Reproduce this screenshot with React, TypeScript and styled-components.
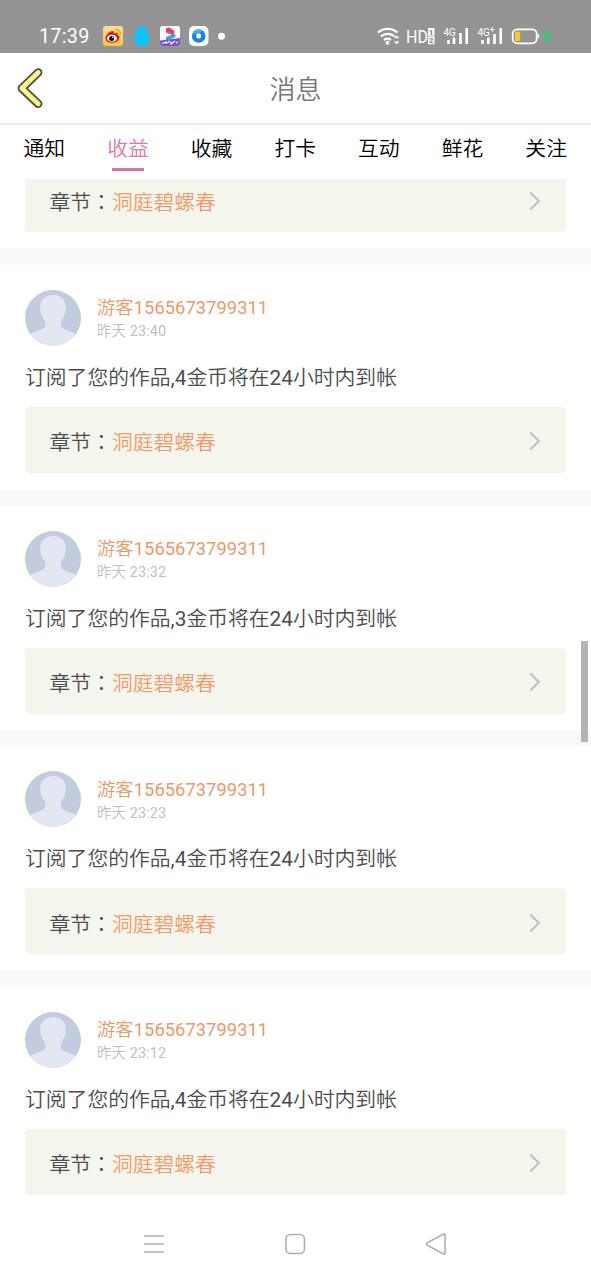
import React from "react";
import styled, { createGlobalStyle } from "styled-components";

const GlobalStyle = createGlobalStyle`
  * { box-sizing: border-box; }
  body {
    margin: 0;
    background: #fff;
    font-family: Roboto, "Noto Sans CJK SC", sans-serif;
  }
`;

const Screen = styled.div`
  position: relative;
  display: flex;
  flex-direction: column;
  width: 591px;
  height: 1280px;
  overflow: hidden;
  background: #fff;
`;

const StatusBar = styled.div`
  display: flex;
  flex: none;
  justify-content: space-between;
  align-items: center;
  height: 52.5px;
  padding: 19px 36px 0 39px;
  background: #949494;
  color: #fff;
`;

const StatusGroup = styled.div`
  display: flex;
  align-items: center;
  height: 34px;
`;

const Clock = styled.span`
  width: 64px;
  padding-top: 2px;
  font-size: 19.7px;
  line-height: 34px;
  letter-spacing: 0.3px;
`;

const Header = styled.header`
  display: flex;
  flex: none;
  align-items: center;
  height: 72.5px;
  padding: 0 17px;
  border-bottom: 2px solid #ececec;
`;

const BackIcon = styled.svg`
  flex: none;
  width: 27px;
  height: 42px;
`;

const Title = styled.h1`
  flex: 1;
  margin: 0 27px 0 0;
  padding-top: 5px;
  color: #777;
  font-size: 26px;
  font-weight: 350;
  line-height: 38px;
  text-align: center;
`;

const Tabs = styled.nav`
  display: flex;
  flex: none;
  justify-content: space-between;
  height: 53.9px;
  padding: 8px 24px 0 23.5px;
`;

const Tab = styled.div<{ $active?: boolean }>`
  display: flex;
  flex-direction: column;
  align-items: center;
  gap: 3px;
  color: ${(p) => (p.$active ? "#e277ac" : "#000")};
  font-size: 20.8px;
  font-weight: 350;
  line-height: 32px;
  &::after {
    content: "";
    width: 32px;
    height: 3px;
    background: ${(p) => (p.$active ? "#d873a5" : "transparent")};
  }
`;

const List = styled.main`
  display: flex;
  flex: 1;
  flex-direction: column;
  min-height: 0;
  overflow: hidden;
`;

const Card = styled.article<{ $partial?: boolean }>`
  flex: none;
  height: ${(p) => (p.$partial ? "86.5px" : "240.7px")};
  padding: ${(p) => (p.$partial ? "0" : "24.5px")} 25px 0;
  border-bottom: 16.5px solid #faf8f9;
`;

const Sender = styled.div`
  display: flex;
  gap: 16px;
`;

const Avatar = styled.svg`
  flex: none;
  width: 56px;
  height: 56px;
`;

const SenderText = styled.div`
  display: flex;
  flex-direction: column;
  padding-top: 4.5px;
`;

const Digits = styled.span`
  font-weight: 400;
`;

const Name = styled.span`
  color: #eb9a6b;
  font-size: 18.3px;
  font-weight: 350;
  letter-spacing: 0.07px;
  line-height: 27px;
`;

const Time = styled.span`
  color: #bfbfbf;
  font-size: 14.4px;
  font-weight: 350;
  letter-spacing: 0.15px;
  line-height: 21px;
`;

const Message = styled.p`
  height: 32px;
  margin: 16px 0 13px;
  color: #4c4c4c;
  font-size: 20.8px;
  font-weight: 350;
  line-height: 32px;
  white-space: nowrap;
`;

const Chapter = styled.div<{ $partial?: boolean }>`
  display: flex;
  align-items: center;
  height: 66px;
  margin-top: ${(p) => (p.$partial ? "-12.7px" : "0")};
  padding: 3px 24px 0 24.5px;
  border-radius: 4px;
  background: #f4f5ed;
  font-size: 20.8px;
  font-weight: 350;
`;

const ChapterLabel = styled.span`
  color: #4c4c4c;
`;

const Colon = styled.span`
  font-family: "Noto Sans CJK TC", sans-serif;
`;

const ChapterName = styled.span`
  flex: 1;
  color: #ee9c6e;
`;

const Chevron = styled.svg`
  width: 14px;
  height: 22px;
`;

const NavBar = styled.footer`
  display: flex;
  flex: none;
  justify-content: space-between;
  align-items: center;
  height: 72px;
  padding: 0 144px 0 143px;
  background: #fff;
`;

const NavIcon = styled.svg`
  width: 22px;
  height: 24px;
  fill: none;
  stroke: #b0b0b0;
  stroke-width: 1.6;
`;

const ScrollThumb = styled.div`
  position: absolute;
  top: 641px;
  right: 3.5px;
  width: 6.5px;
  height: 101px;
  background: #b3b3b3;
`;

const NotificationIcons = () => (
  <svg width="124" height="24" viewBox="103 24 124 24">
    <defs>
      <linearGradient id="gold" x1="0" y1="0" x2="0" y2="1">
        <stop offset="0" stopColor="#f7dfa0" />
        <stop offset="1" stopColor="#fbc641" />
      </linearGradient>
      <clipPath id="tile">
        <rect x="160" y="26" width="20" height="20" rx="2.5" />
      </clipPath>
    </defs>
    <rect x="103" y="26" width="20" height="20" rx="3" fill="url(#gold)" />
    <path d="M105.5 38c.5-4 5-7.500 7.500-7 1.300.3 1 2 .8 2.500 2-1 4.500-.8 4 1.500 2.200 1 1.800 2.500 1.400 3.500-1.200 5.500-13.700 6-13.700-.5z" fill="#d31f1c" />
    <ellipse cx="112" cy="38.300" rx="4.900" ry="3.500" fill="#fff" />
    <circle cx="111.600" cy="38.500" r="2.500" fill="#161010" />
    <circle cx="112.600" cy="37.600" r=".7" fill="#fff" />
    <path d="M115.500 29.500c3.500-.5 5.500 2.500 4.600 5.500M115.800 32c1.500 0 2.400 1 2 2.500" fill="none" stroke="#eda12b" strokeWidth="1.400" />
    <path d="M141.800 26c-3.600 0-5.200 2.600-5.400 5.500-.1 2-2.600 5-2.600 8.500 0 1.600.9 2 1.800 1.300.3 1 .8 1.500 1.200 2-1.500 1.200-.6 2.700 1.500 2.700h7c2.100 0 3-1.500 1.500-2.700.4-.5.900-1 1.200-2 .9.700 1.800.3 1.800-1.300 0-3.500-2.500-6.500-2.600-8.500-.2-2.900-1.800-5.500-5.400-5.500z" fill="#0bc4fb" />
    <g clipPath="url(#tile)">
      <rect x="160" y="26" width="20" height="20" fill="#fff" />
      <path d="M166 28.500l3-1.300 5.500 3.800-.5 4.500-8-3z" fill="#f2386e" />
      <path d="M172 33l4 2-1.500 2.500-8.500 3.500v-4l4.500-1.800z" fill="#28a9e0" />
      <path d="M160 40.500l20-2.500v8h-20z" fill="#7751d5" />
      <path d="M162 43.500l4-1.500v2M167 43l3-2M171 42v2l4-3M176 43l2-1" fill="none" stroke="#fff" strokeWidth="1.200" />
    </g>
    <rect x="189" y="26" width="19.500" height="20" rx="5" fill="#fff" />
    <circle cx="198.700" cy="36" r="6.800" fill="#1c83d8" />
    <path d="M192.500 34a6.800 6.800 0 0 1 10-3.500l-3 3z" fill="#42adf0" />
    <circle cx="198.700" cy="36" r="2.500" fill="#fff" />
    <circle cx="221.500" cy="36.300" r="3.500" fill="#fff" />
  </svg>
);

const SystemIcons = () => (
  <svg width="178" height="26" viewBox="377 23 178 26" fill="none" stroke="#fff">
    <path d="M378 32.500a15 15 0 0 1 19.500 0M381 36.300a10.500 10.500 0 0 1 13.500 0M384 40a6 6 0 0 1 7 0" strokeWidth="2.200" />
    <circle cx="387.500" cy="42.700" r="2" fill="#fff" stroke="none" />
    <path d="M394.700 38.200l1.900-1.900 1.900 1.900M394.700 41.300l1.900 1.900 1.900-1.900" strokeWidth="1.500" />
    <text x="406" y="43" fontSize="18" fill="#fff" stroke="none" textLength="22" lengthAdjust="spacingAndGlyphs">HD</text>
    <rect x="428" y="28" width="6.500" height="7.700" fill="#fff" stroke="none" />
    <rect x="428" y="36.500" width="6.500" height="7.700" fill="#fff" stroke="none" />
    <g fill="#777" stroke="none" fontSize="7.500" fontWeight="700">
      <text x="429" y="34.600">1</text>
      <text x="429" y="43.100">2</text>
    </g>
    <g fill="#fff" stroke="none" fontSize="10">
      <text x="443.500" y="35.500">4G</text>
      <text x="477.500" y="35.500">4G</text>
    </g>
    <path d="M490 29.500h4.500M492.200 27.200v4.600" strokeWidth="1.200" />
    <path d="M448.500 40v4M454 37.500v6.500M460.500 33v11M466.700 28v16M482.500 40v4M488.300 37.500v6.500M494.500 34v10M500.700 28v16" strokeWidth="2.600" />
    <rect x="512.700" y="29.300" width="24" height="14" rx="4.500" strokeWidth="1.800" />
    <path d="M538 33.500q2.500 2.700 0 5.500z" fill="#fff" stroke="none" />
    <rect x="515" y="31.500" width="5.200" height="9.800" rx="1.500" fill="#f8c72a" stroke="none" />
    <path d="M548.500 28.300l-6.500 9h4.300v7l6.700-9h-4.500z" fill="#38c878" stroke="none" />
  </svg>
);

const ChapterLink = ({ partial }: { partial?: boolean }) => (
  <Chapter $partial={partial}>
    <ChapterLabel>
      章节<Colon lang="zh-TW">：</Colon>
    </ChapterLabel>
    <ChapterName>洞庭碧螺春</ChapterName>
    <Chevron viewBox="0 0 14 22">
      <path d="M2.300 2.500L10.800 11l-8.500 8.500" fill="none" stroke="#c3c3bd" strokeWidth="2.200" />
    </Chevron>
  </Chapter>
);

const earnings = [
  { time: "23:40", coins: 4 },
  { time: "23:32", coins: 3 },
  { time: "23:23", coins: 4 },
  { time: "23:12", coins: 4 },
];

const tabs = ["通知", "收益", "收藏", "打卡", "互动", "鲜花", "关注"];

export default function App() {
  return (
    <Screen>
      <GlobalStyle />
      <StatusBar>
        <StatusGroup>
          <Clock>17:39</Clock>
          <NotificationIcons />
        </StatusGroup>
        <StatusGroup>
          <SystemIcons />
        </StatusGroup>
      </StatusBar>
      <Header>
        <BackIcon viewBox="0 0 27 42" fill="none" strokeLinecap="round" strokeLinejoin="round">
          <path d="M21.200 5.500L4.800 21.300l16.400 15.500" stroke="#54534a" strokeWidth="8.600" />
          <path d="M21.200 5.500L4.800 21.300l16.400 15.500" stroke="#fbf28a" strokeWidth="4.800" />
        </BackIcon>
        <Title>消息</Title>
      </Header>
      <Tabs>
        {tabs.map((label) => (
          <Tab key={label} $active={label === "收益"}>
            {label}
          </Tab>
        ))}
      </Tabs>
      <List>
        <Card $partial>
          <ChapterLink partial />
        </Card>
        {earnings.map(({ time, coins }) => (
          <Card key={time}>
            <Sender>
              <Avatar viewBox="0 0 56 56">
                <defs>
                  <clipPath id="face">
                    <circle cx="28" cy="28" r="28" />
                  </clipPath>
                </defs>
                <g clipPath="url(#face)">
                  <rect width="56" height="56" fill="#c3cbdf" />
                  <path
                    d="M28 5c-8 0-12.800 5-12.800 12.500 0 5 1.500 9.500 4.300 12.500 1.500 3 1 7-1.500 8.500C13 41 6.500 42 3 46v10h50V46c-3.500-4-10-5-15-7.500-2.500-1.500-3-5.500-1.500-8.500 2.800-3 4.300-7.500 4.300-12.500C40.800 10 36 5 28 5z"
                    fill="#e3e7f1"
                  />
                </g>
              </Avatar>
              <SenderText>
                <Name>
                  游客<Digits>1565673799311</Digits>
                </Name>
                <Time>
                  昨天 <Digits>{time}</Digits>
                </Time>
              </SenderText>
            </Sender>
            <Message>
              订阅了您的作品<Digits>,{coins}</Digits>金币将在<Digits>24</Digits>小时内到帐
            </Message>
            <ChapterLink />
          </Card>
        ))}
      </List>
      <NavBar>
        <NavIcon viewBox="0 0 22 24">
          <path d="M1 4h20M1 12h20M1 20h20" />
        </NavIcon>
        <NavIcon viewBox="0 0 22 24">
          <rect x="2" y="2.500" width="18.500" height="19" rx="4.500" />
        </NavIcon>
        <NavIcon viewBox="0 0 22 24" strokeLinejoin="round">
          <path d="M18.500 2L2.200 10.700q-1.700 1.300 0 2.600L18.500 22q1.500.5 1.500-1V3q0-1.500-1.500-1z" />
        </NavIcon>
      </NavBar>
      <ScrollThumb />
    </Screen>
  );
}
